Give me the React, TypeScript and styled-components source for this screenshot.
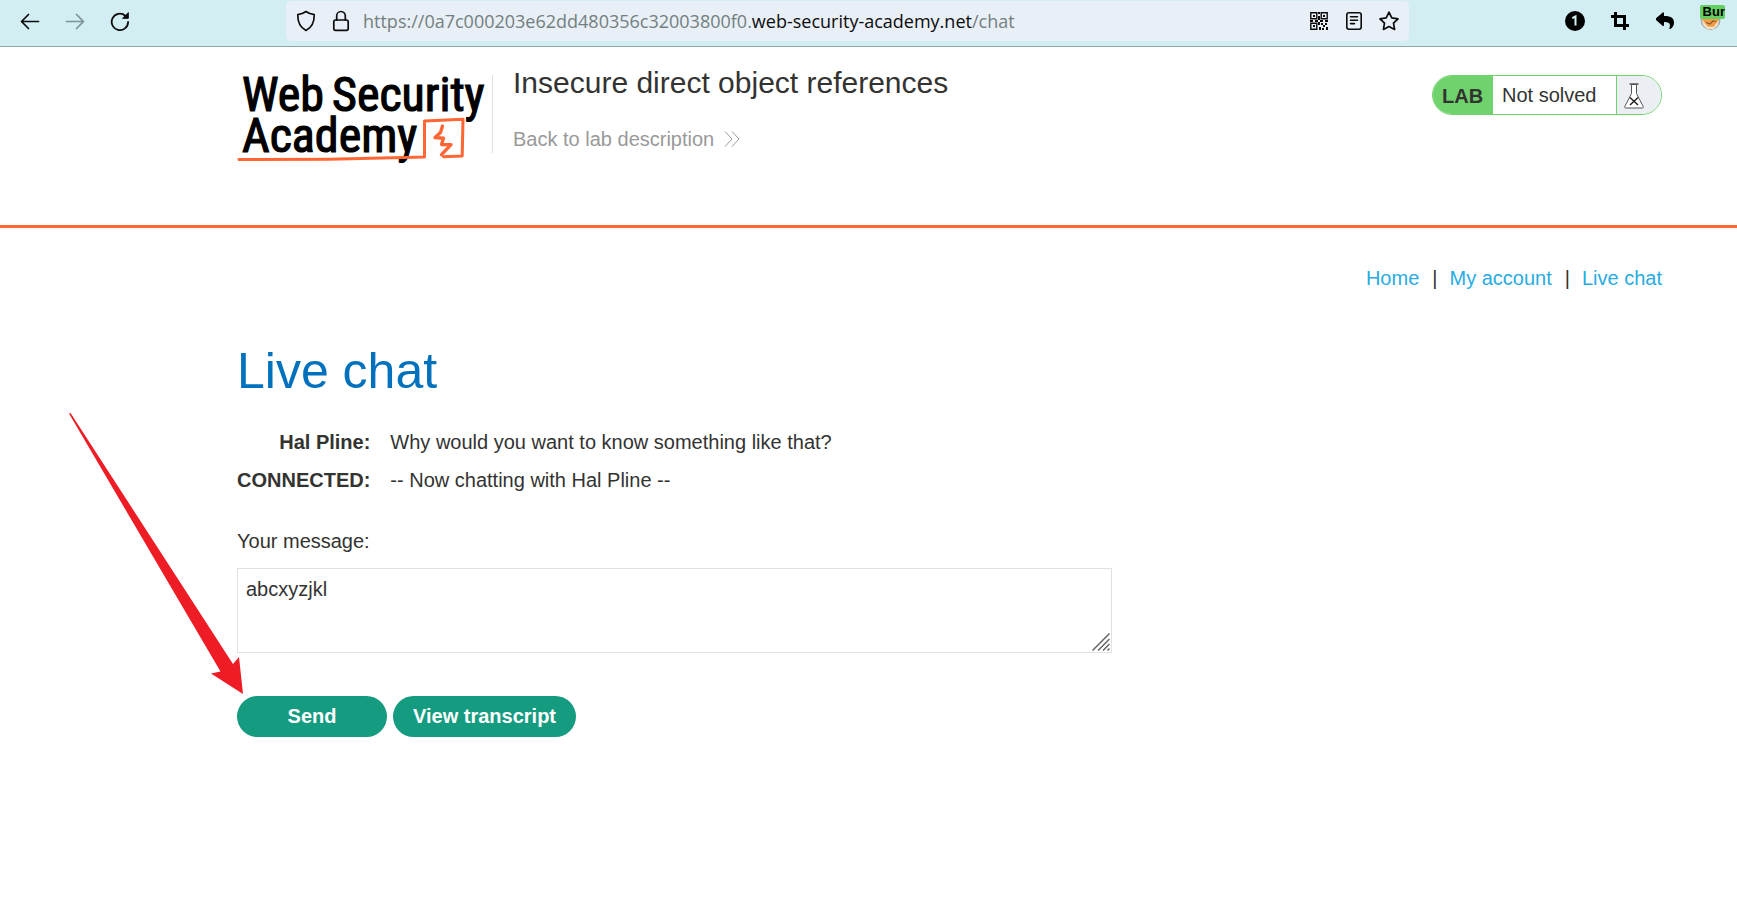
import React, { useState } from 'react';
import styled, { createGlobalStyle } from 'styled-components';

const GlobalStyle = createGlobalStyle`
  *, *::before, *::after { box-sizing: border-box; }
  body {
    margin: 0;
    background: #fff;
    color: #333332;
    font-family: Arial, 'Liberation Sans', sans-serif;
    font-size: 20px;
    line-height: 24px;
  }
`;

const Page = styled.div`
  position: relative;
`;

/* Browser toolbar */

const Toolbar = styled.div`
  display: grid;
  grid-template-columns: 286px minmax(0, 1fr) 328px;
  height: 47px;
  padding-top: 1px;
  background: #d2eef2;
  border-bottom: 1px solid #8fa5a9;
`;

const ToolGroup = styled.div<{ $end?: boolean }>`
  display: flex;
  height: 40px;
  padding-left: ${(p) => (p.$end ? 143 : 7)}px;
`;

const ToolButton = styled.button<{ $width?: number; $dim?: boolean }>`
  display: flex;
  flex: none;
  align-items: center;
  justify-content: center;
  width: ${(p) => p.$width ?? 45}px;
  height: 40px;
  padding: 0;
  border: 0;
  background: none;
  color: ${(p) => (p.$dim ? '#7f9296' : '#0c0c0d')};
`;

const AddressBar = styled.div`
  display: flex;
  align-items: center;
  height: 40px;
  padding: 0 3px 0 2px;
  border-radius: 5px;
  background: #e8eff6;
`;

const Address = styled.div`
  flex: 1;
  min-width: 0;
  padding-left: 5px;
  overflow: hidden;
  white-space: nowrap;
  font-family: 'Open Sans', 'Noto Sans', sans-serif;
  font-size: 18px;
  color: #73807f;

  strong {
    font-weight: 400;
    color: #0c0c0d;
  }
`;

const Extension = styled.button`
  position: relative;
  display: flex;
  width: 25px;
  height: 30px;
  margin: 0 0 0 13px;
  padding: 0;
  border: 0;
  background: none;
`;

const ExtensionBadge = styled.span`
  position: absolute;
  top: 4px;
  left: 0;
  width: 25px;
  height: 14px;
  overflow: hidden;
  border-radius: 2px;
  background: #62cf62;
  color: #000;
  font: bold 13px/14px 'Liberation Sans', sans-serif;
  text-align: right;
`;

/* Lab header */

const Header = styled.header`
  display: flex;
  align-items: flex-start;
  min-height: 181px;
  padding: 19px 75px 20px 237px;
  border-bottom: 3px solid #ff6633;
`;

const LogoLink = styled.a`
  display: block;
  flex: none;
  width: 256px;
  height: 78px;
  margin-top: 9px;
  border-right: 1px solid #e0e0e0;

  svg {
    display: block;
    overflow: visible;
  }
`;

const TitleBlock = styled.div`
  flex: 1;
  padding-left: 20px;
`;

const LabTitle = styled.h2`
  margin: 0 0 27px;
  font-size: 30px;
  font-weight: 400;
  line-height: 34px;
`;

const BackLink = styled.a`
  display: inline-flex;
  align-items: center;
  gap: 10px;
  color: #999;
  text-decoration: none;
`;

const LabStatus = styled.div`
  display: flex;
  width: 230px;
  height: 40px;
  margin-top: 9px;
  overflow: hidden;
  border: 1px solid #70d26c;
  border-radius: 20px;
`;

const StatusTag = styled.span`
  width: 60px;
  padding: 8px 0 0 9px;
  background: #70d26c;
  font-weight: 700;
`;

const StatusText = styled.p`
  flex: 1;
  margin: 0;
  padding: 7px 0 0 9px;
`;

const StatusIcon = styled.span`
  width: 45px;
  padding: 7px 0 0 7px;
  border-left: 1px solid #70d26c;
  background: #ebeff3;

  svg { display: block; }
`;

/* Chat page */

const Main = styled.main`
  padding: 38px 75px 0 237px;
`;

const SiteNav = styled.nav`
  display: flex;
  justify-content: flex-end;

  a {
    color: #29abe2;
    text-decoration: none;
  }

  span {
    padding: 0 12px 0 13px;
  }
`;

const Heading = styled.h1`
  margin: 53px 0 24px;
  color: #0071bd;
  font-size: 50px;
  font-weight: 400;
  line-height: 56px;
`;

const ChatLog = styled.table`
  border-collapse: collapse;

  th, td {
    padding: 7px 0;
  }

  th {
    padding-right: 20px;
    text-align: right;
  }
`;

const ChatForm = styled.form`
  margin-top: 30px;
`;

const FieldLabel = styled.label`
  display: block;
  margin-bottom: 15px;
`;

const MessageField = styled.div`
  position: relative;
  max-width: 875px;
  height: 85px;

  svg {
    position: absolute;
    right: 2px;
    bottom: 2px;
    pointer-events: none;
  }
`;

const MessageInput = styled.textarea`
  display: block;
  width: 100%;
  height: 100%;
  padding: 8px;
  border: 1px solid #e1e1e1;
  outline: 0;
  background: #fff;
  color: inherit;
  font: inherit;
  resize: none;
`;

const Actions = styled.div`
  display: flex;
  gap: 6px;
  margin-top: 43px;
`;

const ActionButton = styled.button`
  min-width: 150px;
  height: 41px;
  padding: 0 20px 2px;
  border: 0;
  border-radius: 21px;
  background: #159b80;
  color: #fff;
  font: inherit;
  font-weight: 700;
`;

const Pointer = styled.svg`
  position: absolute;
  top: 413px;
  left: 69px;
  pointer-events: none;
`;

const line = { fill: 'none', stroke: 'currentColor', strokeWidth: 1.7, strokeLinecap: 'round', strokeLinejoin: 'round' } as const;

const ArrowIcon = ({ flip }: { flip?: boolean }) => (
  <svg width="20" height="20" viewBox="0 0 20 20" {...line}>
    <path d={flip ? 'M1.5 10.5H18M11.5 3.5l7 7-7 7' : 'M18.500 10.5H2M8.500 3.5l-7 7 7 7'} />
  </svg>
);

const ReloadIcon = () => (
  <svg width="20" height="20" viewBox="0 0 20 20" {...line} strokeWidth={1.8}>
    <path d="M18.100 10.900A8.200 8.200 0 1 1 15.300 4.700" />
    <path d="M18.300 2v5.300H13z" fill="currentColor" strokeWidth={1} />
  </svg>
);

const ShieldIcon = () => (
  <svg width="20" height="22" viewBox="0 0 20 22" {...line}>
    <path d="M10 1.500c2.500 1.800 5 2.700 8.200 3.100.2 6.200-1.700 12.400-8.200 15.900C3.500 17 1.600 10.800 1.800 4.600 5 4.200 7.500 3.300 10 1.500z" />
  </svg>
);

const LockIcon = () => (
  <svg width="18" height="22" viewBox="0 0 18 22" {...line}>
    <rect x="1.800" y="10" width="14.400" height="10.300" rx="1.800" />
    <path d="M4.700 10V5.800a4.300 4.300 0 0 1 8.600 0V10" />
  </svg>
);

const QrIcon = () => (
  <svg width="18" height="18" viewBox="0 0 18 18" fill="none" stroke="currentColor" strokeWidth="1.400">
    <path d="M.8.8h6v6h-6zM11.200.8h6v6h-6zM.8 11.200h6v6h-6z" />
    <path fill="currentColor" stroke="none" d="M3 3h2v2H3zM13 3h2v2h-2zM3 13h2v2H3zM8 0h2v2H8zM8 4h2v4H8zM0 8h3v2H0zM5 8h3v2H5zM10 8h3v2h-3zM15 8h3v2h-3zM8 10h2v3H8zM11 11h2v2h-2zM13 13h2v2h-2zM9 15h2v3H9zM15 11h2v2h-2zM16 15h2v3h-2zM12 16h2v2h-2z" />
  </svg>
);

const ReaderIcon = () => (
  <svg width="18" height="20" viewBox="0 0 18 20" {...line} strokeWidth={1.600}>
    <rect x="1.800" y="1.800" width="14.400" height="16.400" rx="2.200" />
    <path d="M5.500 5.800h7M5.500 9.200h7M5.500 12.600h4" />
  </svg>
);

const StarIcon = () => (
  <svg width="22" height="22" viewBox="0 0 22 22" {...line}>
    <path d="M11 2.200l2.800 5.700 6.200.9-4.500 4.400 1.100 6.200L11 16.500l-5.600 2.900 1.100-6.200L2 8.800l6.200-.9z" />
  </svg>
);

const OneIcon = () => (
  <svg width="20" height="20" viewBox="0 0 20 20">
    <circle cx="10" cy="10" r="10" fill="#000" />
    <path d="M7.300 7.200l3.200-1.700v9" fill="none" stroke="#d2eef2" strokeWidth="2" />
  </svg>
);

const CropIcon = () => (
  <svg width="18" height="18" viewBox="0 0 18 18" fill="none" stroke="#000" strokeWidth="3">
    <path d="M4.500 0v13.500H18M0 4.500h13.500V18" />
  </svg>
);

const ReplyIcon = () => (
  <svg width="18" height="18" viewBox="0 0 18 18">
    <path
      fill="#000"
      d="M0 6.200 6.800.5c.5-.4 1.200-.1 1.200.6v3c5.800.1 10 1.300 10 6.600 0 2.600-1.600 5-3.600 6.300-.5.300-1.200-.1-1-.700 1.700-5.300-.6-6.300-5.400-6.400v3.400c0 .7-.7 1-1.200.6L0 8c-.5-.5-.5-1.300 0-1.800z"
    />
  </svg>
);

const FoxIcon = () => (
  <svg width="22" height="30" viewBox="0 0 22 30">
    <circle cx="10.500" cy="19" r="10" fill="#a3abaf" />
    <circle cx="10.500" cy="19" r="8.500" fill="#f6eee4" />
    <path d="M2 18h17l-1.500 4.500C15.500 26 13 28.500 10.500 28.500s-5-2.500-7-6z" fill="#f29d45" />
    <path d="M2.500 19l5 6.500 6 .5 5-6.500-1 5-4 3.500h-6l-4-3.500z" fill="#f8e3cb" />
    <path d="M6 21.500l4 1.500 3-3 3 .5" fill="none" stroke="#8a5a35" strokeWidth="1.200" />
  </svg>
);

const Logo = () => (
  <svg width="250" height="78" viewBox="0 0 250 78" role="img" aria-label="Web Security Academy">
    <g
      fill="#000"
      stroke="#000"
      strokeWidth="1.200"
      fontFamily="'Roboto Condensed', 'Liberation Sans Narrow', Roboto, sans-serif"
      fontSize="48"
    >
      <text x="5" y="36">Web</text>
      <text x="95" y="36">Security</text>
      <text x="5" y="77">Academy</text>
    </g>
    <g fill="none" stroke="#ff6633" strokeLinejoin="round" strokeLinecap="round">
      <path d="M2 84.500l90-.2 95.500-2.300V46l38.500-1.700-.8 36.700-18.700.8" strokeWidth="3" />
      <path d="M205.500 51l-2 6.500-5.500 5 8.500.8-2 6.200 9.500.2-9.500 10" strokeWidth="3.400" />
    </g>
  </svg>
);

const FlaskIcon = () => (
  <svg width="20" height="26" viewBox="0 0 20 26" fill="#fff" stroke="#555" strokeWidth="1">
    <path d="M7.500 1.500v9L.8 23.500c-.4 1 .1 1.500 1 1.500h16.400c.9 0 1.400-.5 1-1.500L12.500 10.500v-9z" />
    <path d="M5.500 1h9" strokeWidth="1.400" />
    <path d="M6 14.500l8 7.500M14 14.500L6 22" stroke="#222" strokeWidth="1.500" />
  </svg>
);

const ChevronsIcon = () => (
  <svg width="16" height="16" viewBox="0 0 16 16" fill="none" stroke="#999" strokeWidth="1">
    <path d="M1 .5L8 8l-7 7.500M8 .5L15 8l-7 7.500" />
  </svg>
);

const log = [
  { who: 'Hal Pline:', text: 'Why would you want to know something like that?' },
  { who: 'CONNECTED:', text: '-- Now chatting with Hal Pline --' },
];

export default function App() {
  const [message, setMessage] = useState('abcxyzjkl');

  return (
    <Page>
      <GlobalStyle />
      <Toolbar>
        <ToolGroup>
          <ToolButton aria-label="Back"><ArrowIcon /></ToolButton>
          <ToolButton aria-label="Forward" $dim><ArrowIcon flip /></ToolButton>
          <ToolButton aria-label="Reload"><ReloadIcon /></ToolButton>
        </ToolGroup>
        <AddressBar>
          <ToolButton aria-label="Tracking protection" $width={35}><ShieldIcon /></ToolButton>
          <ToolButton aria-label="Site security" $width={35}><LockIcon /></ToolButton>
          <Address>
            https://0a7c000203e62dd480356c32003800f0.<strong>web-security-academy.net</strong>/chat
          </Address>
          <ToolButton aria-label="QR code" $width={35}><QrIcon /></ToolButton>
          <ToolButton aria-label="Reader view" $width={35}><ReaderIcon /></ToolButton>
          <ToolButton aria-label="Bookmark" $width={35}><StarIcon /></ToolButton>
        </AddressBar>
        <ToolGroup $end>
          <ToolButton aria-label="Notifications"><OneIcon /></ToolButton>
          <ToolButton aria-label="Capture"><CropIcon /></ToolButton>
          <ToolButton aria-label="Undo"><ReplyIcon /></ToolButton>
          <Extension aria-label="Proxy switcher">
            <FoxIcon />
            <ExtensionBadge>Bur</ExtensionBadge>
          </Extension>
        </ToolGroup>
      </Toolbar>

      <Header>
        <LogoLink href="#"><Logo /></LogoLink>
        <TitleBlock>
          <LabTitle>Insecure direct object references</LabTitle>
          <BackLink href="#">Back to lab description <ChevronsIcon /></BackLink>
        </TitleBlock>
        <LabStatus>
          <StatusTag>LAB</StatusTag>
          <StatusText>Not solved</StatusText>
          <StatusIcon><FlaskIcon /></StatusIcon>
        </LabStatus>
      </Header>

      <Main>
        <SiteNav>
          <a href="#home">Home</a>
          <span>|</span>
          <a href="#account">My account</a>
          <span>|</span>
          <a href="#chat">Live chat</a>
        </SiteNav>
        <Heading>Live chat</Heading>
        <ChatLog>
          <tbody>
            {log.map((row) => (
              <tr key={row.who}>
                <th scope="row">{row.who}</th>
                <td>{row.text}</td>
              </tr>
            ))}
          </tbody>
        </ChatLog>
        <ChatForm onSubmit={(e) => e.preventDefault()}>
          <FieldLabel htmlFor="message">Your message:</FieldLabel>
          <MessageField>
            <MessageInput id="message" value={message} onChange={(e) => setMessage(e.target.value)} />
            <svg width="18" height="18" viewBox="0 0 18 18" stroke="#666" strokeWidth="1.500">
              <path d="M.5 17.500l17-17M6 17.500L17.500 6M11 17.500l6.500-6.500M15.500 17.500l2-2" />
            </svg>
          </MessageField>
          <Actions>
            <ActionButton type="submit">Send</ActionButton>
            <ActionButton type="button">View transcript</ActionButton>
          </Actions>
        </ChatForm>
      </Main>

      <Pointer width="175" height="282" viewBox="0 0 175 282" aria-hidden="true">
        <path d="M0 .5L1.500 0 164 251l6-7 4 37-32-20.500 9.500-2z" fill="#ee1c25" />
      </Pointer>
    </Page>
  );
}
